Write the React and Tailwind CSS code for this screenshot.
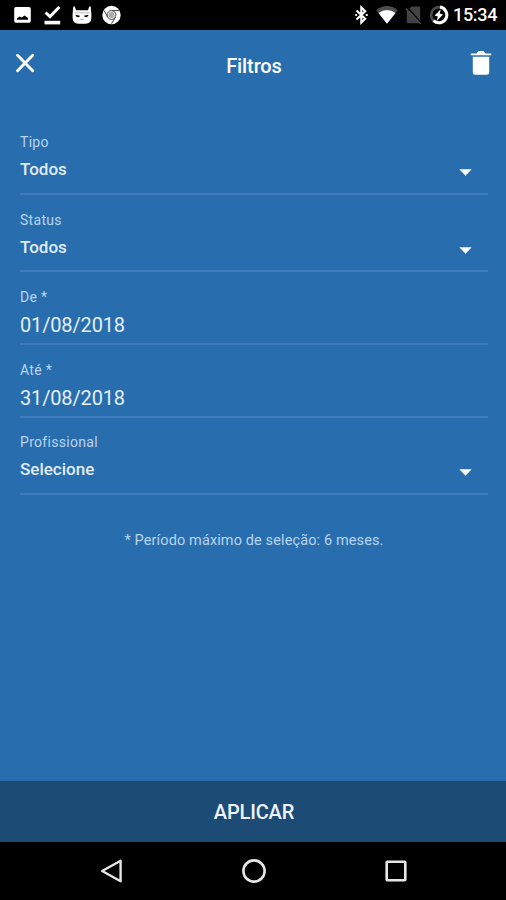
function StatusBar() {
  return (
    <div className="flex h-[30px] shrink-0 items-center justify-between bg-black pr-[9px] pl-[14px] text-white">
      <div className="flex items-center">
        <svg className="h-[18px] w-[17px]" viewBox="0 0 17 18" fill="currentColor">
          <path fillRule="evenodd" d="M2 1h13a1.8 1.8 0 0 1 1.8 1.8V15A1.8 1.8 0 0 1 15 16.700H2A1.800 1.800 0 0 1 .2 15V2.800A1.800 1.800 0 0 1 2 1zM3 13.800h11v-1.800L10.500 9.500l-2.700 2-2-1L3 12.200z" />
        </svg>
        <svg className="ml-[13px] h-[20px] w-[17px]" viewBox="0 0 17 20">
          <path d="M1.500 7.500 6 11.600 15.300 2" fill="none" stroke="currentColor" strokeWidth="3" />
          <path d="M.5 15.800h15.700v3.600H.5z" fill="currentColor" />
        </svg>
        <svg className="ml-[11px] h-[20px] w-[20px]" viewBox="0 0 20 20">
          <path d="M1.300 1.600h1.500L4 5.200H16l1.200-3.600h1.500L19.300 8c.2 2.500.2 6-.5 7.700-1 2.400-3.500 3.100-8.800 3.100s-7.800-.7-8.800-3.100C.5 14 .5 10.500.7 8z" fill="currentColor" />
          <path d="m3.400 9.800 4.600.9c-.3 2-4 2.200-4.600-.9zM16.600 9.800l-4.600.9c.3 2 4 2.200 4.600-.9z" fill="#000" />
          <path d="M8.500 14.300h3" stroke="#999" strokeWidth="1" />
          <path d="M2.500 7.800h15" stroke="#999" strokeWidth=".7" />
        </svg>
        <svg className="ml-[10px] h-[20px] w-[20px]" viewBox="0 0 20 20">
          <circle cx="9.500" cy="10" r="9.200" fill="currentColor" />
          <g fill="none" stroke="#444" strokeWidth="1">
            <circle cx="9.500" cy="10" r="4.400" />
            <path d="M9.500 5.600h8M5.700 12.200 2 5.500M13.300 12.200 9.500 18.800" />
          </g>
          <circle cx="9.500" cy="10" r="3" fill="#aaa" />
        </svg>
      </div>
      <div className="flex items-center">
        <svg className="h-[20px] w-[13px]" viewBox="0 0 13 20" fill="none" stroke="currentColor" strokeWidth="2.100">
          <path d="m1.500 5.400 8.700 8.400L6.300 17.600V2.400l3.900 3.800-8.700 8.400" />
          <path d="M.3 10h1.800M10.800 10h1.900" />
        </svg>
        <svg className="ml-[8px] h-[20px] w-[22px]" viewBox="0 0 22 20">
          <path d="M.3 5.200Q11-3.200 21.700 5.200L11 18.800z" fill="#4d4d4d" />
          <path d="M2.500 8Q11 1.800 19.500 8L11 18.800z" fill="currentColor" />
        </svg>
        <svg className="ml-[7px] h-[20px] w-[17px]" viewBox="0 0 17 20">
          <path d="M6.500 1.500H14q1.200 0 1.200 1.200V17q0 1.200-1.200 1.200H3Q1.800 18.200 1.800 17V6.200z" fill="#424242" />
          <path d="m2.300 3 14 15.200" stroke="#000" strokeWidth="2" />
          <path d="m1 3.500 14.800 15.500" stroke="#4c4c4c" strokeWidth="1.400" />
        </svg>
        <svg className="ml-[7px] h-[20px] w-[20px]" viewBox="0 0 20 20">
          <circle cx="10" cy="10" r="7.900" fill="none" stroke="#4c4c4c" strokeWidth="2.600" />
          <path d="M11 2.100a7.900 7.900 0 1 1-6.500 13.600" fill="none" stroke="currentColor" strokeWidth="3" />
          <path d="M11.800 4.200 5.600 10.600l3.200 1-1 4.400 6.200-6.600-3.300-.8z" fill="currentColor" />
        </svg>
        <span className="ml-[4px] w-[44px] text-[18px] leading-none font-medium tracking-[-0.3px] whitespace-nowrap">15:34</span>
      </div>
    </div>
  );
}

function Header() {
  return (
    <header className="flex h-[88px] shrink-0 items-start justify-between pt-[20px] pr-[14px] pl-[15px] text-white">
      <svg className="mt-[3px] h-[20px] w-[21px]" viewBox="0 0 21 20" fill="none" stroke="currentColor" strokeWidth="2.900" strokeLinecap="round">
        <path d="m2.500 2.200 15.200 15.600M17.700 2.200 2.500 17.800" />
      </svg>
      <h1 className="mt-[4px] ml-[2px] text-[20px] leading-[24px] font-medium tracking-[-0.1px]">Filtros</h1>
      <svg className="h-[26px] w-[22px]" viewBox="0 0 22 26" fill="currentColor">
        <path d="M.7 3.400h5.800L8.500 1h5l2 2.400h5.800v1.800H.7zM2.800 6.800h16.400v15.400q0 2.500-2.500 2.500H5.300q-2.500 0-2.500-2.500z" />
      </svg>
    </header>
  );
}

function SelectField({ label, value, padding = "pt-[15px]" }) {
  return (
    <div className={`flex h-[77px] shrink-0 flex-col border-b-2 border-[#3e7cba] ${padding}`}>
      <span className="text-[14px] leading-[18px] tracking-[0.3px] text-[#b9d4ef]">{label}</span>
      <div className="mt-[8px] flex items-center justify-between pr-[16px]">
        <span className="-mt-px text-[17px] leading-[22px] font-medium text-[#e0ecfa]">{value}</span>
        <svg className="mt-[6px] h-[7px] w-[13px]" viewBox="0 0 13 7">
          <path d="M.3.3h12.400L6.500 6.800z" fill="#fff" />
        </svg>
      </div>
    </div>
  );
}

function DateField({ label, value }) {
  return (
    <div className="flex h-[73px] shrink-0 flex-col border-b-2 border-[#3e7cba] pt-[16px]">
      <span className="text-[14px] leading-[18px] tracking-[0.3px] text-[#b9d4ef]">{label}</span>
      <span className="mt-[7px] text-[20px] leading-[24px] tracking-[-0.15px] text-[#e4effb]">{value}</span>
    </div>
  );
}

export default function App() {
  return (
    <div className="flex h-[900px] w-[506px] flex-col overflow-hidden bg-[#286eae] font-[Roboto,sans-serif]">
      <StatusBar />
      <Header />
      <main className="flex flex-1 flex-col pr-[18px] pl-[20px]">
        <SelectField label="Tipo" value="Todos" />
        <SelectField label="Status" value="Todos" padding="pt-[16px]" />
        <DateField label="De *" value="01/08/2018" />
        <DateField label="Até *" value="31/08/2018" />
        <SelectField label="Profissional" value="Selecione" />
        <p className="mt-[36px] text-center text-[14.500px] leading-[20px] tracking-[0.12px] text-[#b9d4ef]">* Período máximo de seleção: 6 meses.</p>
      </main>
      <button className="flex h-[61px] shrink-0 items-center justify-center bg-[#1c4c75] pl-[2px] text-[20px] font-medium tracking-[-0.15px] text-[#f0f4fa]">APLICAR</button>
      <nav className="flex h-[58px] shrink-0 items-center justify-between bg-black pr-[99px] pl-[100px] text-[#e6e6e6]">
        <svg className="h-[24px] w-[23px]" viewBox="0 0 23 24" fill="none" stroke="currentColor" strokeWidth="2.400" strokeLinejoin="round">
          <path d="M20.600 1.800v20.400L2.200 12z" />
        </svg>
        <svg className="-ml-px h-[26px] w-[26px]" viewBox="0 0 26 26" fill="none" stroke="currentColor" strokeWidth="2.600">
          <circle cx="13" cy="13" r="10.600" />
        </svg>
        <svg className="h-[22px] w-[22px]" viewBox="0 0 22 22" fill="none" stroke="currentColor" strokeWidth="2.600">
          <rect x="1.700" y="1.700" width="18.600" height="18.600" rx=".8" />
        </svg>
      </nav>
    </div>
  );
}
